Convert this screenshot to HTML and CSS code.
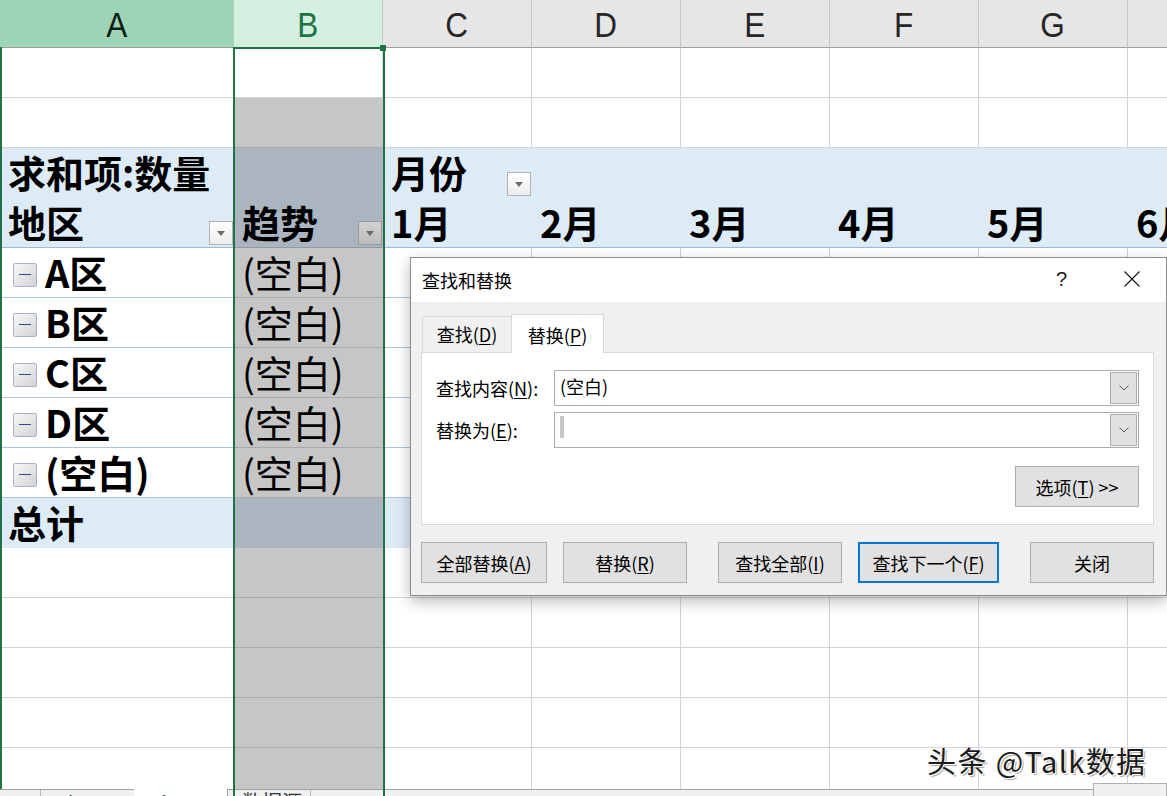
FILE: index.html
```html
<!DOCTYPE html>
<html lang="zh-CN">
<head>
<meta charset="utf-8">
<title>查找和替换</title>
<link rel="stylesheet" href="styles.css">
</head>
<body>
<div class="sheet">
  <div class="row hdrow">
    <div class="cell hd ca hd-a"><span>A</span></div>
    <div class="cell hd hd-b"><span>B</span></div>
    <div class="cell hd"><span>C</span></div>
    <div class="cell hd"><span>D</span></div>
    <div class="cell hd"><span>E</span></div>
    <div class="cell hd"><span>F</span></div>
    <div class="cell hd"><span>G</span></div>
    <div class="cell hd"><span>H</span></div>
  </div>
  <div class="row">
    <div class="cell ca"></div><div class="cell"></div><div class="cell"></div><div class="cell"></div><div class="cell"></div><div class="cell"></div><div class="cell"></div><div class="cell"></div>
  </div>
  <div class="row">
    <div class="cell ca"></div><div class="cell gr"></div><div class="cell"></div><div class="cell"></div><div class="cell"></div><div class="cell"></div><div class="cell"></div><div class="cell"></div>
  </div>
  <div class="row">
    <div class="cell ca band"><span class="t">求和项:数量</span></div>
    <div class="cell sel"></div>
    <div class="cell band"><span class="t">月份</span><span class="dd dd-m"></span></div>
    <div class="cell band"></div><div class="cell band"></div><div class="cell band"></div><div class="cell band"></div><div class="cell band"></div>
  </div>
  <div class="row">
    <div class="cell ca band end"><span class="t">地区</span><span class="dd"></span></div>
    <div class="cell sel end"><span class="t">趋势</span><span class="dd dd-sel"></span></div>
    <div class="cell band end"><span class="t">1月</span></div>
    <div class="cell band end"><span class="t">2月</span></div>
    <div class="cell band end"><span class="t">3月</span></div>
    <div class="cell band end"><span class="t">4月</span></div>
    <div class="cell band end"><span class="t">5月</span></div>
    <div class="cell band end"><span class="t">6月</span></div>
  </div>
  <div class="row">
    <div class="cell ca pr"><span class="minus"></span><span class="t bold">A区</span></div>
    <div class="cell gr"><span class="t">(空白)</span></div>
    <div class="cell pr"></div><div class="cell pr"></div><div class="cell pr"></div><div class="cell pr"></div><div class="cell pr"></div><div class="cell pr"></div>
  </div>
  <div class="row">
    <div class="cell ca pr"><span class="minus"></span><span class="t bold">B区</span></div>
    <div class="cell gr"><span class="t">(空白)</span></div>
    <div class="cell pr"></div><div class="cell pr"></div><div class="cell pr"></div><div class="cell pr"></div><div class="cell pr"></div><div class="cell pr"></div>
  </div>
  <div class="row">
    <div class="cell ca pr"><span class="minus"></span><span class="t bold">C区</span></div>
    <div class="cell gr"><span class="t">(空白)</span></div>
    <div class="cell pr"></div><div class="cell pr"></div><div class="cell pr"></div><div class="cell pr"></div><div class="cell pr"></div><div class="cell pr"></div>
  </div>
  <div class="row">
    <div class="cell ca pr"><span class="minus"></span><span class="t bold">D区</span></div>
    <div class="cell gr"><span class="t">(空白)</span></div>
    <div class="cell pr"></div><div class="cell pr"></div><div class="cell pr"></div><div class="cell pr"></div><div class="cell pr"></div><div class="cell pr"></div>
  </div>
  <div class="row">
    <div class="cell ca pr"><span class="minus"></span><span class="t bold">(空白)</span></div>
    <div class="cell gr"><span class="t">(空白)</span></div>
    <div class="cell pr"></div><div class="cell pr"></div><div class="cell pr"></div><div class="cell pr"></div><div class="cell pr"></div><div class="cell pr"></div>
  </div>
  <div class="row">
    <div class="cell ca band"><span class="t">总计</span></div>
    <div class="cell sel"></div>
    <div class="cell band"></div><div class="cell band"></div><div class="cell band"></div><div class="cell band"></div><div class="cell band"></div><div class="cell band"></div>
  </div>
  <div class="row">
    <div class="cell ca"></div><div class="cell gr"></div><div class="cell"></div><div class="cell"></div><div class="cell"></div><div class="cell"></div><div class="cell"></div><div class="cell"></div>
  </div>
  <div class="row">
    <div class="cell ca"></div><div class="cell gr"></div><div class="cell"></div><div class="cell"></div><div class="cell"></div><div class="cell"></div><div class="cell"></div><div class="cell"></div>
  </div>
  <div class="row">
    <div class="cell ca"></div><div class="cell gr"></div><div class="cell"></div><div class="cell"></div><div class="cell"></div><div class="cell"></div><div class="cell"></div><div class="cell"></div>
  </div>
  <div class="row">
    <div class="cell ca"></div><div class="cell gr"></div><div class="cell"></div><div class="cell"></div><div class="cell"></div><div class="cell"></div><div class="cell"></div><div class="cell"></div>
  </div>
  <div class="row">
    <div class="cell ca"></div><div class="cell gr"></div><div class="cell"></div><div class="cell"></div><div class="cell"></div><div class="cell"></div><div class="cell"></div><div class="cell"></div>
  </div>
</div>

<div class="tabbar">
  <div class="tb-nav"></div>
  <div class="tb-tab">Sheet1</div>
  <div class="tb-tab tb-on">Sheet2</div>
  <div class="tb-tab tb-src">数据源</div>
  <div class="tb-add">⊕</div>
  <div class="tb-scroll"></div>
</div>

<div class="selbox"></div>
<div class="selhandle"></div>
<div class="selleft"></div>

<div class="watermark">头条 @Talk数据</div>

<div class="dlg">
  <div class="dlg-title">
    <span class="dlg-name">查找和替换</span>
    <span class="dlg-help">?</span>
    <svg class="dlg-x" width="16" height="16" viewBox="0 0 16 16"><path d="M0.5 0.5 L15.5 15.5 M15.5 0.5 L0.5 15.5" stroke="#111" stroke-width="1.1" fill="none"/></svg>
  </div>
  <div class="dlg-body">
    <div class="tabs">
      <div class="tab">查找(<u>D</u>)</div>
      <div class="tab tab-on">替换(<u>P</u>)</div>
    </div>
    <div class="panel">
      <div class="field">
        <span class="lbl">查找内容(<u>N</u>):</span>
        <div class="combo"><span class="val">(空白)</span><span class="cbtn"><svg width="10" height="6" viewBox="0 0 10 6"><path d="M0.5 0.5 L5 5 L9.5 0.5" stroke="#555" stroke-width="1" fill="none"/></svg></span></div>
      </div>
      <div class="field">
        <span class="lbl">替换为(<u>E</u>):</span>
        <div class="combo"><span class="caret"></span><span class="cbtn"><svg width="10" height="6" viewBox="0 0 10 6"><path d="M0.5 0.5 L5 5 L9.5 0.5" stroke="#555" stroke-width="1" fill="none"/></svg></span></div>
      </div>
      <div class="optrow"><span class="btn btn-opt">选项(<u>T</u>) &gt;&gt;</span></div>
    </div>
    <div class="btns">
      <span class="btn b1">全部替换(<u>A</u>)</span>
      <span class="btn b2">替换(<u>R</u>)</span>
      <span class="btn b3">查找全部(<u>I</u>)</span>
      <span class="btn b4 btn-def">查找下一个(<u>F</u>)</span>
      <span class="btn b5">关闭</span>
    </div>
  </div>
</div>
</body>
</html>
```

FILE: styles.css
```css
html, body {
  margin: 0;
  padding: 0;
}
body {
  width: 1167px;
  height: 796px;
  overflow: hidden;
  position: relative;
  background: #fff;
  font-family: "Noto Sans CJK SC", "Liberation Sans", sans-serif;
  color: #000;
}

/* ---------- sheet ---------- */
.sheet {
  height: 789px;
  overflow: hidden;
}
.row {
  display: flex;
  height: 50px;
}
.hdrow {
  height: 48px;
}
.cell {
  flex: none;
  box-sizing: border-box;
  width: 149px;
  height: 100%;
  border-right: 1px solid #d4d4d4;
  border-bottom: 1px solid #d4d4d4;
  display: flex;
  align-items: flex-start;
  padding: 2px 0 0 8px;
  font-size: 38px;
  line-height: 44px;
  white-space: nowrap;
  overflow: hidden;
}
.ca {
  width: 234px;
}
.hd {
  background: #e6e6e6;
  border-right-color: #c6c6c6;
  border-bottom-color: #9e9e9e;
  justify-content: center;
  align-items: center;
  padding: 2px 0 0 0;
  font-family: "Liberation Sans", sans-serif;
  font-size: 35px;
  line-height: 40px;
  color: #262626;
}
.hd span {
  display: inline-block;
  transform: scaleX(0.9);
}
.hd-a {
  background: #9fd5b7;
  border-right-color: #9fd5b7;
  color: #0c1f14;
}
.hd-b {
  background: #d3f0e0;
  color: #217346;
}

.gr {
  background: #c6c6c6;
  border-right-color: #c6c6c6;
  border-bottom-color: #a9a9a9;
}
.band {
  background: #ddebf7;
  border-right-color: #ddebf7;
  border-bottom-color: #ddebf7;
  font-weight: 700;
}
.sel {
  background: #abb5bf;
  border-right-color: #abb5bf;
  border-bottom-color: #abb5bf;
  font-weight: 700;
}
.band.end {
  border-bottom-color: #9cb8db;
}
.sel.end {
  border-bottom-color: #8e9aa8;
}
.pr {
  border-bottom-color: #b0c4e0;
}
.bold {
  font-weight: 700;
}
.t {
  display: block;
}

.dd {
  flex: none;
  box-sizing: border-box;
  width: 24px;
  height: 24px;
  margin: 21px 0 0 auto;
  border: 1px solid #b3b3b3;
  background: linear-gradient(#ffffff, #ececec);
  position: relative;
}
.dd::after {
  content: "";
  position: absolute;
  left: 7px;
  top: 9px;
  border-left: 4px solid transparent;
  border-right: 4px solid transparent;
  border-top: 5px solid #6a6a6a;
}
.dd-m {
  margin-top: 22px;
}
.dd-sel {
  background: linear-gradient(#d0d0d0, #bdbdbd);
  border-color: #9a9a9a;
}

.minus {
  flex: none;
  box-sizing: border-box;
  width: 24px;
  height: 24px;
  margin: 13px 8px 0 5px;
  border: 1px solid #a7b4c6;
  border-radius: 2px;
  background: linear-gradient(135deg, #f8f8f8, #d3d3d3);
  position: relative;
}
.minus::after {
  content: "";
  position: absolute;
  left: 5px;
  right: 5px;
  top: 10px;
  height: 1px;
  background: #2d4c8c;
}

/* selection */
.selbox {
  position: absolute;
  left: 233px;
  top: 47px;
  width: 152px;
  height: 760px;
  box-sizing: border-box;
  border: 2px solid #217346;
  border-bottom: none;
  pointer-events: none;
}
.selhandle {
  position: absolute;
  left: 380px;
  top: 45px;
  width: 6px;
  height: 6px;
  background: #217346;
}
.selleft {
  position: absolute;
  left: 0;
  top: 47px;
  width: 2px;
  height: 742px;
  background: #217346;
}

/* sheet tabs */
.tabbar {
  display: flex;
  height: 30px;
  box-sizing: border-box;
  border-top: 1px solid #a0a0a0;
  background: #f0f0f0;
  font-family: "Liberation Sans", "Noto Sans CJK SC", sans-serif;
  font-size: 20px;
  line-height: 30px;
  color: #333;
  position: relative;
}
.tb-nav {
  width: 40px;
  border-right: 1px solid #b8b8b8;
}
.tb-tab {
  box-sizing: border-box;
  width: 93px;
  padding-left: 14px;
  margin-top: -1px;
  border-top: 1px solid #a0a0a0;
  line-height: 26px;
}
.tb-on {
  background: #fff;
  border-top-color: #fff;
  color: #217346;
  font-weight: 700;
}
.tb-src {
  width: 84px;
  border-left: 1px solid #a0a0a0;
  border-right: 1px solid #b8b8b8;
  font-family: "Noto Sans CJK SC", sans-serif;
  line-height: 24px;
}
.tb-add {
  width: 40px;
  text-align: center;
  color: #777;
  line-height: 30px;
}
.tb-scroll {
  margin-left: auto;
  width: 74px;
  height: 20px;
  margin-top: -7px;
  box-sizing: border-box;
  border: 1px solid #b0b0b0;
  border-bottom: none;
  background: #f0f0f0;
}

/* watermark */
.watermark {
  position: absolute;
  left: 927px;
  top: 740px;
  font-family: "Noto Sans CJK SC", "Liberation Sans", sans-serif;
  font-size: 29px;
  line-height: 40px;
  letter-spacing: 1.4px;
  color: #1a1a1a;
  text-shadow: 1px 1px 0 #ffffff, 2px 2px 1px rgba(0, 0, 0, 0.35);
  white-space: nowrap;
}

/* ---------- dialog ---------- */
.dlg {
  position: absolute;
  left: 410px;
  top: 257px;
  width: 757px;
  height: 339px;
  box-sizing: border-box;
  border: 1px solid #8c8c8c;
  background: #f0f0f0;
  box-shadow: 0 5px 14px rgba(0, 0, 0, 0.28);
  display: flex;
  flex-direction: column;
  font-family: "Noto Sans CJK SC", sans-serif;
  font-size: 18px;
  color: #000;
}
.dlg u {
  text-decoration: underline;
  text-underline-offset: 2px;
}
.dlg-title {
  height: 44px;
  flex: none;
  background: #fff;
  display: flex;
  align-items: center;
  padding-left: 11px;
  line-height: 20px;
}
.dlg-name {
  margin-top: -1px;
}
.dlg-help {
  margin-left: auto;
  font-family: "Liberation Sans", sans-serif;
  font-size: 20px;
  color: #1a1a1a;
  margin-right: 57px;
  margin-top: -2px;
}
.dlg-x {
  margin-right: 26px;
  margin-top: -2px;
}
.dlg-body {
  flex: 1;
  padding: 12px 12px 0 10px;
}
.tabs {
  display: flex;
  align-items: flex-end;
  height: 38px;
  padding-left: 1px;
}
.tab {
  box-sizing: border-box;
  height: 36px;
  width: 89px;
  border: 1px solid #dcdcdc;
  border-right: none;
  border-bottom: none;
  text-align: center;
  line-height: 34px;
}
.tab-on {
  width: 93px;
  height: 39px;
  margin-bottom: -1px;
  background: #fff;
  border-right: 1px solid #d9d9d9;
  border-color: #d9d9d9;
  line-height: 40px;
  position: relative;
  z-index: 1;
}
.panel {
  box-sizing: border-box;
  height: 173px;
  width: 733px;
  background: #fff;
  border: 1px solid #d9d9d9;
  padding: 17px 14px 0 14px;
}
.field {
  display: flex;
  align-items: center;
  height: 36px;
  margin-bottom: 6px;
}
.lbl {
  width: 118px;
  flex: none;
  line-height: 20px;
}
.combo {
  box-sizing: border-box;
  width: 587px;
  height: 36px;
  border: 1px solid #acacac;
  display: flex;
  align-items: center;
  padding: 1px 1px 1px 5px;
  background: #fff;
}
.val {
  margin-top: -4px;
  line-height: 20px;
}
.caret {
  width: 4px;
  height: 22px;
  margin-top: -6px;
  background: #c6c6c6;
}
.cbtn {
  margin-left: auto;
  box-sizing: border-box;
  width: 27px;
  height: 32px;
  border: 1px solid #adadad;
  background: #e1e1e1;
  display: flex;
  align-items: center;
  justify-content: center;
}
.optrow {
  display: flex;
  justify-content: flex-end;
  padding-top: 12px;
}
.btn {
  box-sizing: border-box;
  height: 41px;
  border: 1px solid #adadad;
  background: #e1e1e1;
  display: flex;
  align-items: center;
  justify-content: center;
  line-height: 20px;
  white-space: nowrap;
}
.btn-opt {
  width: 124px;
}
.btns {
  display: flex;
  margin-top: 17px;
}
.b1 { width: 126px; }
.b2 { width: 124px; margin-left: 16px; }
.b3 { width: 124px; margin-left: 31px; }
.b4 { width: 141px; margin-left: 16px; }
.b5 { width: 124px; margin-left: 31px; }
.btn-def {
  border: 2px solid #0078d7;
}
```
